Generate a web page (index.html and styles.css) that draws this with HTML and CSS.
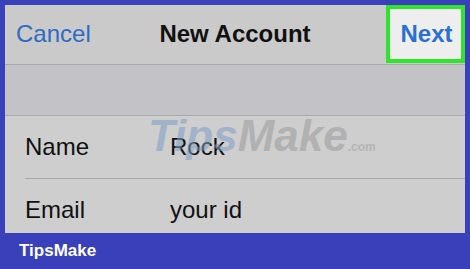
FILE: index.html
```html
<!DOCTYPE html>
<html>
<head>
<meta charset="utf-8">
<link rel="stylesheet" href="styles.css">
</head>
<body>
<div class="frame">
  <div class="screen">
    <div class="nav">
      <div class="cancel">Cancel</div>
      <div class="title">New Account</div>
      <div class="next-wrap"><div class="next">Next</div></div>
    </div>
    <div class="spacer"></div>
    <div class="list">
      <div class="row first">
        <span class="label">Name</span><span class="value">Rock</span>
      </div>
      <div class="row">
        <span class="label">Email</span><span class="value">your id</span>
      </div>
    </div>
    <div class="watermark"><span class="wm-tips">Tips</span><span class="wm-make">Make</span><span class="wm-com">.com</span></div>
  </div>
  <div class="footer">TipsMake</div>
</div>
</body>
</html>
```
FILE: styles.css
```css
html, body {
  margin: 0;
  padding: 0;
  width: 470px;
  height: 269px;
  overflow: hidden;
  background: #3a40b9;
  font-family: "Liberation Sans", Arial, sans-serif;
}
.frame {
  padding: 5px 5px 0 5px;
}
.screen {
  position: relative;
  height: 228px;
  overflow: hidden;
  background: #cecece;
}
.nav {
  height: 59px;
  background: #cacaca;
  border-bottom: 1px solid #a8a8a8;
  display: grid;
  grid-template-columns: 1fr auto 1fr;
  align-items: center;
}
.cancel {
  color: #2e6bc2;
  font-size: 24px;
  padding-left: 11px;
  padding-bottom: 2px;
}
.title {
  color: #111;
  font-size: 24px;
  font-weight: bold;
  padding-bottom: 2px;
}
.next-wrap {
  display: flex;
  justify-content: flex-end;
  align-self: start;
}
.next {
  width: 69px;
  height: 50px;
  border: 4px solid #2ee52c;
  background: #eeeeee;
  color: #2a6fd4;
  font-size: 24px;
  font-weight: bold;
  display: flex;
  align-items: center;
  justify-content: center;
  padding-left: 2px;
  box-sizing: content-box;
}
.spacer {
  height: 50px;
  background: #c3c2c7;
  border-bottom: 1px solid #aaaaaa;
}
.list {
  padding-left: 20px;
}
.row {
  height: 62px;
  display: flex;
  align-items: center;
  font-size: 24px;
  color: #111;
}
.row.first {
  height: 62px;
  border-bottom: 1px solid #a9a9a9;
}
.label {
  width: 145px;
}
.watermark {
  position: absolute;
  left: 143px;
  top: 106px;
  font-size: 44px;
  font-weight: bold;
  font-style: italic;
  opacity: 0.55;
  pointer-events: none;
}
.wm-tips { color: #7f9ec5; }
.wm-make { color: #9a9a9a; }
.wm-com { color: #a0a0a0; font-size: 12px; font-style: normal; }
.footer {
  height: 36px;
  display: flex;
  align-items: center;
  padding-left: 14px;
  color: #ffffff;
  font-size: 17px;
  font-weight: bold;
}
```
